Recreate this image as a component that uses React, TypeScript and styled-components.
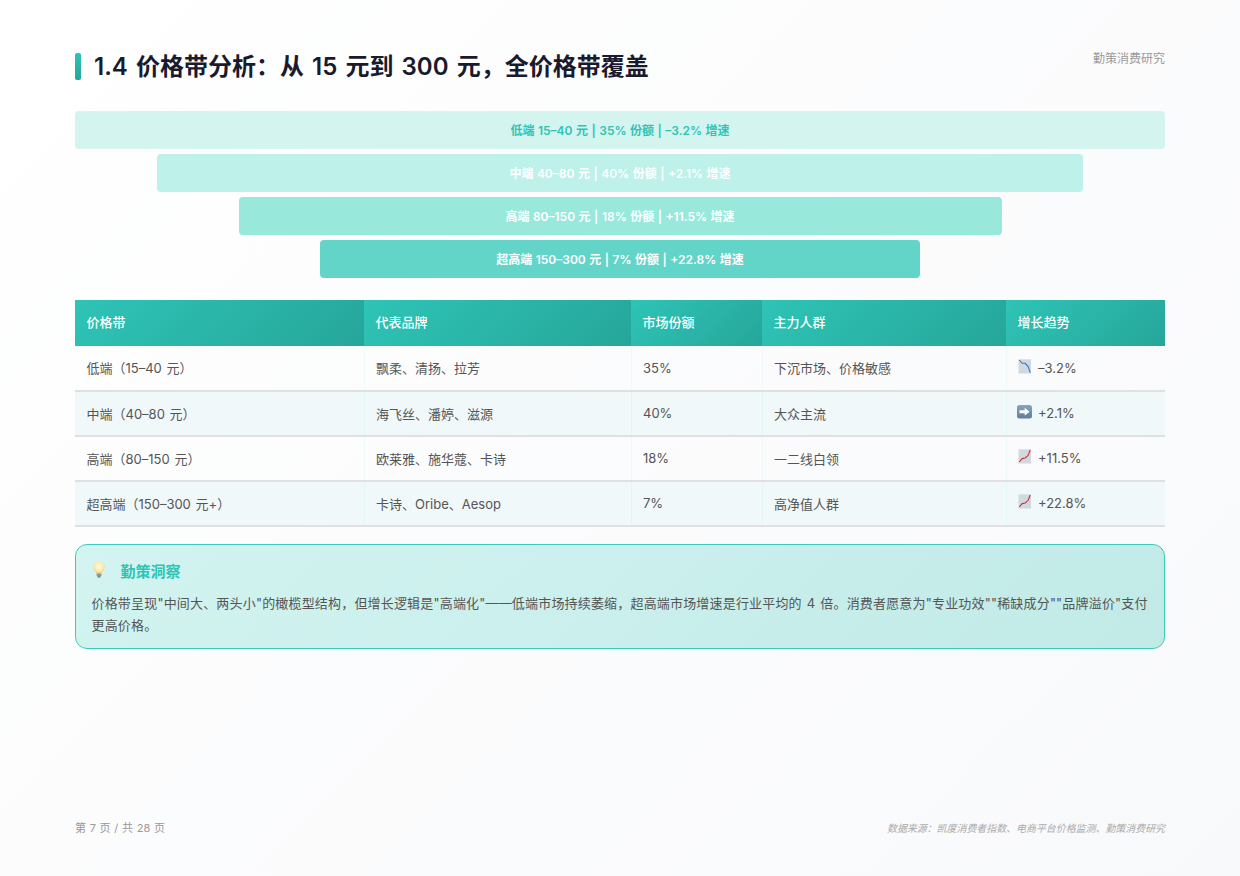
import React from "react";
import styled, { createGlobalStyle } from "styled-components";

const GlobalStyle = createGlobalStyle`
  html, body { margin: 0; padding: 0; }
  body {
    font-family: Inter, "Noto Sans CJK SC", sans-serif;
    word-spacing: 0.07em;
    color: #333;
  }
`;

const Page = styled.div`
  box-sizing: border-box;
  width: 1240px;
  height: 876px;
  padding: 50px 75px 41px;
  display: flex;
  flex-direction: column;
  background: linear-gradient(135deg, #ffffff 0%, #f8f9fb 100%);
`;

const Header = styled.header`
  display: flex;
  justify-content: space-between;
  align-items: flex-start;
  margin-bottom: 28px;
`;

const Title = styled.h1`
  position: relative;
  margin: 0;
  padding-left: 19px;
  font-size: 24px;
  line-height: 33px;
  font-weight: 600;
  word-spacing: 0.087em;
  color: #1a1a2e;

  &::before {
    content: "";
    position: absolute;
    left: 0;
    top: 3px;
    width: 6px;
    height: 27px;
    border-radius: 2px;
    background: linear-gradient(180deg, #2ec4b6, #26a69a);
  }
`;

const Brand = styled.div`
  font-size: 12px;
  line-height: 18px;
  color: #999;
`;

const Funnel = styled.div`
  display: flex;
  flex-direction: column;
  align-items: center;
  gap: 5px;
  margin-bottom: 22px;
`;

const FunnelBar = styled.div<{ $width: number; $bg: string; $color: string }>`
  box-sizing: border-box;
  width: ${(p) => p.$width}%;
  height: 38px;
  padding-bottom: 2px;
  display: flex;
  align-items: center;
  justify-content: center;
  border-radius: 4px;
  background: ${(p) => p.$bg};
  color: ${(p) => p.$color};
  font-size: 12px;
  font-weight: 600;
  word-spacing: 0.04em;
`;

const Table = styled.table`
  width: 100%;
  table-layout: fixed;
  border-collapse: collapse;
  margin-bottom: 17px;
  font-size: 13px;
`;

const Th = styled.th<{ $width: number }>`
  width: ${(p) => p.$width}px;
  height: 46px;
  padding: 0 11.5px 3px;
  box-sizing: border-box;
  text-align: left;
  font-weight: 500;
  color: #fff;
  background: linear-gradient(135deg, #2ec4b6, #26a69a);
`;

const Row = styled.tr<{ $alt: boolean }>`
  background: ${(p) => (p.$alt ? "#f0f8f9" : "transparent")};
`;

const Td = styled.td`
  height: 45px;
  padding: 0 11.5px 1px;
  box-sizing: border-box;
  color: #555;
  border-bottom: 2px solid #e0e0e0;
  border-right: 1px solid rgba(46, 196, 182, 0.06);

  &:last-child {
    border-right: none;
  }
`;

const Trend = styled.span`
  display: flex;
  align-items: center;
  gap: 6px;

  svg {
    margin-bottom: 3px;
  }
`;

const Insight = styled.section`
  box-sizing: border-box;
  height: 105px;
  padding: 13px 15.5px;
  border: 1.5px solid #3fc9bc;
  border-radius: 12px;
  background: linear-gradient(135deg, #d3f4f1, #c1eae7);
`;

const InsightHead = styled.div`
  display: flex;
  align-items: center;
  gap: 15px;
  margin-bottom: 10px;
  height: 24px;

  svg {
    margin-bottom: 2px;
  }
`;

const InsightTitle = styled.h3`
  margin: 0;
  font-size: 15px;
  font-weight: 600;
  color: #2ec4b6;
`;

const InsightText = styled.p`
  margin: 0;
  font-size: 13px;
  line-height: 22px;
  letter-spacing: 0.18px;
  color: #555;
`;

const Footer = styled.footer`
  margin-top: auto;
  display: flex;
  justify-content: space-between;
  align-items: center;
  font-size: 11px;
  word-spacing: 0.055em;
  color: #999;
`;

const Source = styled.span`
  font-size: 10px;
  font-style: italic;
  letter-spacing: -0.07px;
  color: #aaa;
`;

const ChartTile = styled.svg`
  flex: none;
  display: block;
`;

const ArrowTile = styled(ChartTile)`
  margin-left: -1px;
`;

type TrendKind = "down" | "flat" | "up";

function TrendIcon({ kind }: { kind: TrendKind }) {
  if (kind === "flat") {
    return (
      <ArrowTile width="15" height="14" viewBox="0 0 15 14">
        <defs>
          <linearGradient id="arrowTile" x1="0" y1="0" x2="0" y2="1">
            <stop offset="0%" stopColor="#86a4c0" />
            <stop offset="100%" stopColor="#5c7f9f" />
          </linearGradient>
        </defs>
        <rect x="0" y="0" width="15" height="13.5" rx="2.5" fill="url(#arrowTile)" />
        <path d="M2.5 5.2h5.2V2.8l4.8 3.9-4.8 3.9V8.2H2.5z" fill="#fff" />
      </ArrowTile>
    );
  }
  return (
    <ChartTile width="14" height="15" viewBox="0 0 14 15">
      <rect x="0.5" y="0.3" width="12.5" height="14.2" fill="#d0d9e0" />
      {kind === "down" ? (
        <path d="M1.2 1L4.2 4.3h3l3 3.3 2 6" fill="none" stroke="#2b78d0" strokeWidth="1.1" />
      ) : (
        <path d="M1.2 13l3-3.4 3-.6 3-2.7 2-5.3" fill="none" stroke="#d22f2f" strokeWidth="1.1" />
      )}
    </ChartTile>
  );
}

function BulbIcon() {
  return (
    <ChartTile width="14" height="17" viewBox="0 0 14 17">
      <defs>
        <radialGradient id="bulb" cx="50%" cy="40%" r="60%">
          <stop offset="0%" stopColor="#fffbe0" />
          <stop offset="70%" stopColor="#fbe9a8" />
          <stop offset="100%" stopColor="#e8c66a" />
        </radialGradient>
      </defs>
      <path d="M7 .5a5.6 5.6 0 0 0-3.4 10c.7.6.9 1.2.9 2h5c0-.8.2-1.4.9-2A5.6 5.6 0 0 0 7 .5z" fill="url(#bulb)" />
      <rect x="4.6" y="12.5" width="4.8" height="3" rx="1" fill="#8f9296" />
      <rect x="5.6" y="15.3" width="2.8" height="1.2" rx=".6" fill="#6d7074" />
    </ChartTile>
  );
}

const funnel = [
  { width: 100, bg: "#d4f4f0", color: "#2ec4b6", text: "低端 15–40 元 | 35% 份额 | –3.2% 增速" },
  { width: 85, bg: "#bdf1ea", color: "#fff", text: "中端 40–80 元 | 40% 份额 | +2.1% 增速" },
  { width: 70, bg: "#98e9dc", color: "#fff", text: "高端 80–150 元 | 18% 份额 | +11.5% 增速" },
  { width: 55, bg: "#62d4c8", color: "#fff", text: "超高端 150–300 元 | 7% 份额 | +22.8% 增速" },
];

const columns = [
  { label: "价格带", width: 289 },
  { label: "代表品牌", width: 267 },
  { label: "市场份额", width: 131 },
  { label: "主力人群", width: 244 },
  { label: "增长趋势", width: 159 },
];

const rows: { band: string; brands: string; share: string; people: string; kind: TrendKind; growth: string }[] = [
  { band: "低端（15–40 元）", brands: "飘柔、清扬、拉芳", share: "35%", people: "下沉市场、价格敏感", kind: "down", growth: "–3.2%" },
  { band: "中端（40–80 元）", brands: "海飞丝、潘婷、滋源", share: "40%", people: "大众主流", kind: "flat", growth: "+2.1%" },
  { band: "高端（80–150 元）", brands: "欧莱雅、施华蔻、卡诗", share: "18%", people: "一二线白领", kind: "up", growth: "+11.5%" },
  { band: "超高端（150–300 元+）", brands: "卡诗、Oribe、Aesop", share: "7%", people: "高净值人群", kind: "up", growth: "+22.8%" },
];

export default function App() {
  return (
    <Page>
      <GlobalStyle />
      <Header>
        <Title>1.4 价格带分析：从 15 元到 300 元，全价格带覆盖</Title>
        <Brand>勤策消费研究</Brand>
      </Header>

      <Funnel>
        {funnel.map((bar) => (
          <FunnelBar key={bar.text} $width={bar.width} $bg={bar.bg} $color={bar.color}>
            {bar.text}
          </FunnelBar>
        ))}
      </Funnel>

      <Table>
        <thead>
          <tr>
            {columns.map((col) => (
              <Th key={col.label} $width={col.width}>
                {col.label}
              </Th>
            ))}
          </tr>
        </thead>
        <tbody>
          {rows.map((row, i) => (
            <Row key={row.band} $alt={i % 2 === 1}>
              <Td>{row.band}</Td>
              <Td>{row.brands}</Td>
              <Td>{row.share}</Td>
              <Td>{row.people}</Td>
              <Td>
                <Trend>
                  <TrendIcon kind={row.kind} />
                  {row.growth}
                </Trend>
              </Td>
            </Row>
          ))}
        </tbody>
      </Table>

      <Insight>
        <InsightHead>
          <BulbIcon />
          <InsightTitle>勤策洞察</InsightTitle>
        </InsightHead>
        <InsightText>
          价格带呈现"中间大、两头小"的橄榄型结构，但增长逻辑是"高端化"——低端市场持续萎缩，超高端市场增速是行业平均的 4 倍。消费者愿意为"专业功效""稀缺成分""品牌溢价"支付更高价格。
        </InsightText>
      </Insight>

      <Footer>
        <span>第 7 页 / 共 28 页</span>
        <Source>数据来源：凯度消费者指数、电商平台价格监测、勤策消费研究</Source>
      </Footer>
    </Page>
  );
}
